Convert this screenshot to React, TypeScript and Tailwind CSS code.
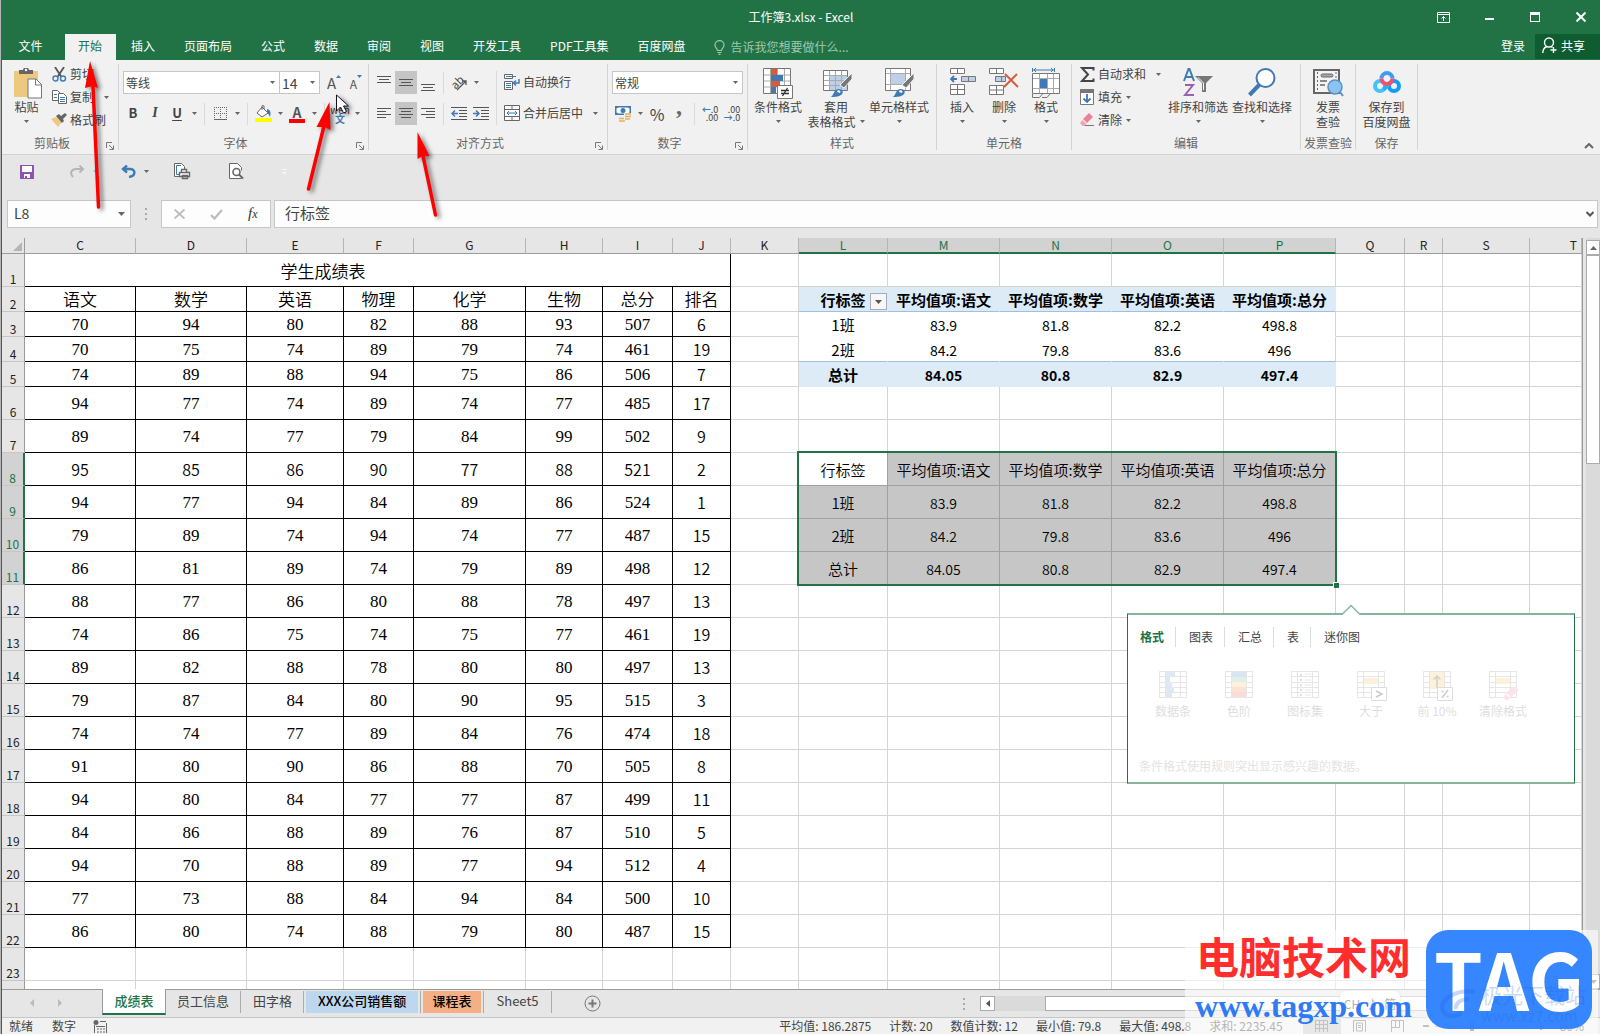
import type { ReactNode } from "react";
import { clsx } from "clsx";

const menuTabs = ["插入", "页面布局", "公式", "数据", "审阅", "视图", "开发工具", "PDF工具集", "百度网盘"];

const columns = [
  { name: "C", width: 111 },
  { name: "D", width: 111 },
  { name: "E", width: 97 },
  { name: "F", width: 70 },
  { name: "G", width: 112 },
  { name: "H", width: 77 },
  { name: "I", width: 70 },
  { name: "J", width: 58 },
  { name: "K", width: 68 },
  { name: "L", width: 89 },
  { name: "M", width: 112 },
  { name: "N", width: 112 },
  { name: "O", width: 112 },
  { name: "P", width: 112 },
  { name: "Q", width: 69 },
  { name: "R", width: 38 },
  { name: "S", width: 87 },
  { name: "T" },
];

// rows 2 - 22 of the score sheet, columns C - J
const scores: (string | number)[][] = [
  ["语文", "数学", "英语", "物理", "化学", "生物", "总分", "排名"],
  [70, 94, 80, 82, 88, 93, 507, 6],
  [70, 75, 74, 89, 79, 74, 461, 19],
  [74, 89, 88, 94, 75, 86, 506, 7],
  [94, 77, 74, 89, 74, 77, 485, 17],
  [89, 74, 77, 79, 84, 99, 502, 9],
  [95, 85, 86, 90, 77, 88, 521, 2],
  [94, 77, 94, 84, 89, 86, 524, 1],
  [79, 89, 74, 94, 74, 77, 487, 15],
  [86, 81, 89, 74, 79, 89, 498, 12],
  [88, 77, 86, 80, 88, 78, 497, 13],
  [74, 86, 75, 74, 75, 77, 461, 19],
  [89, 82, 88, 78, 80, 80, 497, 13],
  [79, 87, 84, 80, 90, 95, 515, 3],
  [74, 74, 77, 89, 84, 76, 474, 18],
  [91, 80, 90, 86, 88, 70, 505, 8],
  [94, 80, 84, 77, 77, 87, 499, 11],
  [84, 86, 88, 89, 76, 87, 510, 5],
  [94, 70, 88, 89, 77, 94, 512, 4],
  [77, 73, 88, 84, 94, 84, 500, 10],
  [86, 80, 74, 88, 79, 80, 487, 15],
];

const pivot = [
  ["行标签", "平均值项:语文", "平均值项:数学", "平均值项:英语", "平均值项:总分"],
  ["1班", "83.9", "81.8", "82.2", "498.8"],
  ["2班", "84.2", "79.8", "83.6", "496"],
  ["总计", "84.05", "80.8", "82.9", "497.4"],
];

const stats = ["平均值: 186.2875", "计数: 20", "数值计数: 12", "最小值: 79.8", "最大值: 498.8", "求和: 2235.45"];

/* ---------- small pieces ---------- */

function Caret({ className }: { className?: string }) {
  return (
    <svg className={clsx("shrink-0", className)} width="5" height="3" viewBox="0 0 5 3">
      <path d="M0 0h5L2.5 3z" fill="#666" />
    </svg>
  );
}

function DropButton({ label }: { label: string }) {
  return (
    <button aria-label={label} className="flex h-full w-3 items-center justify-center">
      <Caret />
    </button>
  );
}

function Tool({ label, active, children }: { label: string; active?: boolean; children: ReactNode }) {
  return (
    <button
      aria-label={label}
      className={clsx("flex h-[23px] w-[22px] shrink-0 items-center justify-center", active && "bg-[#c5c5c5]")}
    >
      {children}
    </button>
  );
}

function Sep() {
  return <div className="mx-1 h-[22px] w-px bg-[#dadada]" />;
}

function Group({ label, launcher, className, children }: { label: string; launcher?: boolean; className: string; children: ReactNode }) {
  return (
    <>
      <section aria-label={label} className={clsx("flex shrink-0 flex-col", className)}>
        <div className="flex flex-1">{children}</div>
        <div className="mb-[3px] flex h-4 items-center text-[#666]">
          <span className="flex-1 text-center whitespace-nowrap">{label}</span>
          {launcher && (
            <button aria-label={label + "设置"} className="flex w-4 items-center justify-center pt-1.5">
              <svg width="8" height="8" viewBox="0 0 8 8" fill="none" stroke="#777">
                <path d="M.5 6V.5H6M3 3l4 4M7.5 3.5v4h-4" />
              </svg>
            </button>
          )}
        </div>
      </section>
      <div className="my-1 w-px shrink-0 bg-[#d4d4d4]" />
    </>
  );
}

function BigButton({ icon, lines, caret, className }: { icon: ReactNode; lines: string[]; caret?: boolean; className: string }) {
  return (
    <button className={clsx("flex shrink-0 flex-col items-center pt-2 leading-[15px] whitespace-nowrap", className)}>
      <span className="flex h-[31px] items-start">{icon}</span>
      <span>{lines[0]}</span>
      <span className="flex h-[15px] items-center gap-1">
        {lines[1]}
        {caret && <Caret />}
      </span>
    </button>
  );
}

function SmallButton({ icon, label, caret, wide }: { icon: ReactNode; label: string; caret?: boolean; wide?: boolean }) {
  return (
    <button className="flex h-[23px] items-center pb-px whitespace-nowrap">
      <span className="mr-[3px] flex w-4 justify-center">{icon}</span>
      {label}
      {caret && <Caret className={wide ? "ml-2.5" : "ml-1"} />}
    </button>
  );
}

function Lines({ rows, blue }: { rows: number[][]; blue?: string }) {
  return (
    <svg width="16" height="16" viewBox="0 0 16 16" fill="none" stroke="#555">
      {rows.map(([x, y, w], i) => (
        <path key={i} d={`M${x} ${y + 0.5}h${w}`} />
      ))}
      {blue && <path d={blue} stroke="#3f7ab5" strokeWidth="1.5" />}
    </svg>
  );
}

function GridIcon({ children }: { children?: ReactNode }) {
  return (
    <svg width="30" height="31" viewBox="0 0 30 31" fill="none">
      <path d="M.5.5h27v25H.5z" fill="#fff" stroke="#777" />
      <path d="M7.5 1v24M14.5 1v24M21.5 1v24M1 7h26M1 13h26M1 19h26" stroke="#aaa" />
      {children}
    </svg>
  );
}

function Brush() {
  return (
    <>
      <path d="M29 5v6l-8 9-4-3z" fill="#777" stroke="#f1f1f1" />
      <path d="M7 29c4 0 3-8 9-8 4 0 5 4 2 6-3 2-7 2-11 2z" fill="#3f7ab5" />
      <path d="M14 24c0-3 5-2 3 1z" fill="#fff" />
    </>
  );
}

/* ---------- title + tabs ---------- */

function TitleBar() {
  return (
    <header className="bg-[#217346] text-white">
      <div className="grid h-[34px] grid-cols-[1fr_auto_1fr] items-center">
        <span />
        <h1>工作簿3.xlsx - Excel</h1>
        <div className="flex justify-end">
          <button aria-label="功能区显示选项" className="flex h-8 w-[46px] items-center justify-center">
            <svg width="13" height="11" viewBox="0 0 13 11" fill="none" stroke="#fff">
              <path d="M.5.5h12v10H.5zM1 2.5h11M6.5 9V4.5M4.5 6.5l2-2 2 2" />
            </svg>
          </button>
          <button aria-label="最小化" className="flex h-8 w-[46px] items-center justify-center">
            <span className="mt-1 h-0.5 w-[9px] bg-white" />
          </button>
          <button aria-label="最大化" className="flex h-8 w-[46px] items-center justify-center">
            <span className="h-2.5 w-2.5 border border-t-3 border-white" />
          </button>
          <button aria-label="关闭" className="flex h-8 w-[42px] items-center justify-center pl-1">
            <svg width="10" height="10" viewBox="0 0 10 10" stroke="#fff" strokeWidth="2">
              <path d="M.5.5l9 9M9.5.5l-9 9" />
            </svg>
          </button>
        </div>
      </div>
      <nav className="flex h-[26px]">
        <button className="w-[63px] pr-1.5 pb-[3px]">文件</button>
        <button className="w-[51px] bg-[#f1f1f1] pr-px pb-[3px] text-[#217346]">开始</button>
        {menuTabs.map((t) => (
          <button key={t} className="pr-3.5 pb-[3px] pl-[15px] whitespace-nowrap">
            {t}
          </button>
        ))}
        <label className="ml-3.5 flex flex-1 items-center gap-1.5 text-[#9fc7ae]">
          <svg width="11" height="15" viewBox="0 0 11 15" fill="none" stroke="#9fc7ae" strokeWidth="1.2">
            <path d="M3.5 10.5C3.5 8.5 1 8 1 5a4.5 4.3 0 0 1 9 0c0 3-2.5 3.5-2.5 5.5zM3.5 12.5h4M4.5 14.3h2" />
          </svg>
          <input className="flex-1 pb-px outline-none placeholder:text-[#9fc7ae]" placeholder="告诉我您想要做什么..." />
        </label>
        <button className="px-2.5 pb-[3px]">登录</button>
        <button className="mb-px flex w-[65px] items-center gap-1 bg-[#0e5c2f] pb-0.5 pl-[7px]">
          <svg width="15" height="17" viewBox="0 0 15 17" fill="none" stroke="#fff" strokeWidth="1.4">
            <circle cx="7" cy="5.5" r="4.5" />
            <path d="M.8 16c0-3.5 1.5-5.5 4-6.5M9 9.500l1.500 1M11.500 10v6M8.500 13h6" />
          </svg>
          共享
        </button>
      </nav>
    </header>
  );
}

/* ---------- ribbon ---------- */

function ClipboardGroup() {
  return (
    <Group label="剪贴板" launcher className="w-[116px]">
      <BigButton
        className="w-[49px]"
        lines={["粘贴"]}
        caret
        icon={
          <svg className="ml-[3px]" width="28" height="31" viewBox="0 0 28 31">
            <path d="M0 3h24v26H0z" fill="#edc87f" />
            <path d="M5 6V2h4c0-3 6-3 6 0h4v4z" fill="#666" />
            <circle cx="12" cy="2" r="1.2" fill="#fff" />
            <path d="M14 11h8l5.5 5.5V30H14z" fill="#fff" stroke="#777" />
            <path d="M21.5 11v6h6" fill="none" stroke="#777" />
          </svg>
        }
      />
      <div className="flex flex-col pt-[3px]">
        <SmallButton
          label="剪切"
          icon={
            <svg width="15" height="15" viewBox="0 0 15 15" fill="none">
              <path d="M3 0l6.500 10M12 0L5.500 10" stroke="#555" strokeWidth="1.8" />
              <circle cx="3.5" cy="11.5" r="2.5" stroke="#3f7ab5" strokeWidth="1.4" />
              <circle cx="11" cy="11.5" r="2.5" stroke="#3f7ab5" strokeWidth="1.4" />
            </svg>
          }
        />
        <div className="flex items-center">
          <SmallButton
            label="复制"
            icon={
              <svg width="15" height="14" viewBox="0 0 15 14" fill="#fff" stroke="#666">
                <path d="M.5.5h5l3 3v7h-8z" />
                <path d="M6.5 3.5h5l3 3v7h-8z" />
                <path d="M2 4.5h3M2 7.5h3M8 7.5h5M8 9.5h5M8 11.5h5" stroke="#3f7ab5" />
              </svg>
            }
          />
          <Caret className="ml-2.5" />
        </div>
        <SmallButton
          label="格式刷"
          icon={
            <svg width="16" height="14" viewBox="0 0 16 14">
              <path d="M0 6l5-2 6 5-4 5z" fill="#edc87f" />
              <path d="M5 3l3-2 2 2 4-3 2 2-4 4 1 2-2 2z" fill="#666" />
            </svg>
          }
        />
      </div>
    </Group>
  );
}

function FontGroup() {
  return (
    <Group label="字体" launcher className="w-[249px]">
      <div className="flex flex-col gap-2 pt-[11px] pl-[3px]">
        <div className="ml-px flex h-[23px]">
          <label className="flex w-[157px] items-center border border-[#c6c6c6] bg-white pr-1">
            <select aria-label="字体名称" className="flex-1 appearance-none pl-0.5 outline-none">
              <option>等线</option>
            </select>
            <Caret />
          </label>
          <label className="-ml-px mr-[3px] flex w-[41px] items-center border border-[#c6c6c6] bg-white pr-1">
            <select aria-label="字号" className="w-6 flex-1 appearance-none pl-0.5 text-sm leading-5 outline-none">
              <option>14</option>
            </select>
            <Caret />
          </label>
          <Tool label="增大字号">
            <span className="text-[15px] text-[#555]">A</span>
            <svg className="mb-3" width="5" height="3" viewBox="0 0 5 3">
              <path d="M0 3h5L2.5 0z" fill="#3f7ab5" />
            </svg>
          </Tool>
          <Tool label="减小字号">
            <span className="pt-0.5 text-xs text-[#555]">A</span>
            <svg className="mb-3" width="5" height="3" viewBox="0 0 5 3">
              <path d="M0 0h5L2.5 3z" fill="#3f7ab5" />
            </svg>
          </Tool>
        </div>
        <div className="flex h-[23px] items-center">
          <Tool label="加粗"><b className="pb-0.5 text-[13px]">B</b></Tool>
          <Tool label="倾斜"><i className="pb-0.5 font-['Liberation_Serif',serif] text-sm font-bold">I</i></Tool>
          <Tool label="下划线"><u className="pb-0.5 text-[13px] font-bold underline-offset-2">U</u></Tool>
          <DropButton label="下划线样式" />
          <Sep />
          <Tool label="边框">
            <svg width="13" height="13" viewBox="0 0 13 13" fill="none" stroke="#666">
              <path d="M.5 0v12M6.5 0v12M12.5 0v12M0 .5h13M0 6.5h13" strokeDasharray="1 1" />
              <path d="M0 12.5h13" />
            </svg>
          </Tool>
          <DropButton label="边框样式" />
          <Sep />
          <Tool label="填充颜色">
            <svg width="17" height="17" viewBox="0 0 17 17">
              <path d="M7 2l6 6-6 4-5-4z" fill="#fff" stroke="#666" />
              <path d="M7 5V1c0-1 2-1 2 0v3" fill="none" stroke="#666" />
              <path d="M12 4c4 1 4 4 3 8-1-2-1-3-3-4z" fill="#3f7ab5" />
              <path d="M0 13h17v4H0z" fill="#ff0" />
            </svg>
          </Tool>
          <DropButton label="选择填充颜色" />
          <Tool label="字体颜色">
            <span className="flex w-4 flex-col items-center border-b-4 border-[#f00] text-sm leading-[14px] font-bold text-[#555]">A</span>
          </Tool>
          <DropButton label="选择字体颜色" />
          <Sep />
          <Tool label="拼音指南">
            <span className="flex flex-col items-center text-[10px] leading-[9px]">
              wén<b className="text-[#3f7ab5]">文</b>
            </span>
          </Tool>
          <DropButton label="拼音设置" />
        </div>
      </div>
    </Group>
  );
}

function AlignGroup() {
  return (
    <Group label="对齐方式" launcher className="w-[238px]">
      <div className="flex w-[127px] shrink-0 flex-col gap-2 pt-[11px]">
        <div className="flex items-center pl-1">
          <Tool label="顶端对齐"><Lines rows={[[1, 1, 14], [3, 4, 10], [1, 7, 14]]} /></Tool>
          <Tool label="垂直居中" active><Lines rows={[[1, 4, 14], [3, 7, 10], [1, 10, 14]]} /></Tool>
          <Tool label="底端对齐"><Lines rows={[[1, 9, 14], [3, 12, 10], [1, 15, 14]]} /></Tool>
          <Sep />
          <Tool label="方向">
            <svg className="overflow-visible" width="17" height="16" viewBox="0 0 17 16">
              <text x="1" y="12" fontSize="11" fill="#444" transform="rotate(-45 6 9)">ab</text>
              <path d="M6 15L15 6M11 6h4v4" fill="none" stroke="#555" strokeWidth="1.3" />
            </svg>
          </Tool>
          <DropButton label="方向选项" />
        </div>
        <div className="flex items-center pl-1">
          <Tool label="左对齐"><Lines rows={[[1, 2, 14], [1, 5, 9], [1, 8, 14], [1, 11, 9]]} /></Tool>
          <Tool label="居中" active><Lines rows={[[1, 2, 14], [3, 5, 10], [1, 8, 14], [3, 11, 10]]} /></Tool>
          <Tool label="右对齐"><Lines rows={[[1, 2, 14], [6, 5, 9], [1, 8, 14], [6, 11, 9]]} /></Tool>
          <Sep />
          <Tool label="减少缩进"><Lines rows={[[0, 1, 16], [8, 4, 8], [8, 7, 8], [8, 10, 8], [0, 13, 16]]} blue="M7 7.5H1M4 4.5l-3 3 3 3" /></Tool>
          <Tool label="增加缩进"><Lines rows={[[0, 1, 16], [8, 4, 8], [8, 7, 8], [8, 10, 8], [0, 13, 16]]} blue="M0 7.5h6M3 4.5l3 3-3 3" /></Tool>
        </div>
      </div>
      <div className="mt-[11px] h-[54px] w-px bg-[#dadada]" />
      <div className="flex flex-col gap-2 pt-[11px] pl-[7px]">
        <SmallButton
          label="自动换行"
          icon={
            <svg width="16" height="16" viewBox="0 0 16 16" fill="none" stroke="#666">
              <path d="M.5.5h8v4h-8zM.5 7.5h8v8h-8z" fill="#fff" />
              <path d="M2 2.5h10M2 9.5h5M2 11.5h5M2 13.5h5" stroke="#3f7ab5" />
              <path d="M15 5v4H10M12 6.5L9.5 9l2.5 2.5" stroke="#3f7ab5" strokeWidth="1.5" />
            </svg>
          }
        />
        <SmallButton
          label="合并后居中"
          caret
          wide
          icon={
            <svg width="16" height="16" viewBox="0 0 16 16" fill="#fff" stroke="#666">
              <path d="M.5.5h15v15H.5zM0 4.5h16M0 11.5h16M8 0v4M8 12v4" />
              <path d="M3 8h10M5 6L3 8l2 2M11 6l2 2-2 2" fill="none" stroke="#3f7ab5" />
            </svg>
          }
        />
      </div>
    </Group>
  );
}

function NumberGroup() {
  return (
    <Group label="数字" launcher className="w-[139px]">
      <div className="flex flex-col gap-2 pt-[11px] pl-1">
        <label className="flex h-[23px] w-[131px] items-center border border-[#c6c6c6] bg-white pr-1">
          <select aria-label="数字格式" className="flex-1 appearance-none pl-0.5 outline-none">
            <option>常规</option>
          </select>
          <Caret />
        </label>
        <div className="flex h-[23px] items-center">
          <Tool label="会计数字格式">
            <svg width="17" height="16" viewBox="0 0 17 16">
              <path d="M0 0h16v9H0z" fill="#3f7ab5" />
              <path d="M1.5 2.5l2-1h9l2 1v4l-2 1h-9l-2-1z" fill="#fff" />
              <circle cx="8" cy="4.5" r="2.5" fill="#3f7ab5" />
              <path d="M9 7h7v8H4v-4h5z" fill="#f1f1f1" />
              <path d="M10 8h6M10 10.5h6M10 13h5M4 12.5h5M4 15h6" stroke="#e3b15b" strokeWidth="1.7" />
            </svg>
          </Tool>
          <DropButton label="会计格式选项" />
          <Tool label="百分比样式"><span className="text-base">%</span></Tool>
          <Tool label="千位分隔样式"><span className="pb-4 font-['Liberation_Serif',serif] text-2xl leading-5 font-bold text-[#666]">,</span></Tool>
          <Sep />
          <Tool label="增加小数位数">
            <span className="flex flex-col text-right text-[9px] leading-[8px]"><span><b className="text-[#3f7ab5]">←</b>.0</span><span>.00</span></span>
          </Tool>
          <Tool label="减少小数位数">
            <span className="flex flex-col text-right text-[9px] leading-[8px]"><span>.00</span><span><b className="text-[#3f7ab5]">→</b>.0</span></span>
          </Tool>
        </div>
      </div>
    </Group>
  );
}

function StyleGroup() {
  return (
    <Group label="样式" className="w-[188px]">
      <BigButton
        className="w-[60px]"
        lines={["条件格式"]}
        caret
        icon={
          <GridIcon>
            <path d="M8 1h6v6H8zM8 13h9v6H8z" fill="#d65d3b" />
            <path d="M8 7h12v6H8zM8 19h5v6H8z" fill="#3f7ab5" />
            <path d="M14.5 17.5h15v13h-15z" fill="#fff" stroke="#777" />
            <path d="M18 22.5h8M18 25.5h8M24.5 20l-5 8" stroke="#333" strokeWidth="1.3" />
          </GridIcon>
        }
      />
      <BigButton
        className="w-[56px]"
        lines={["套用", "表格格式"]}
        caret
        icon={
          <svg className="ml-[3px]" width="30" height="31" viewBox="0 0 30 31" fill="none">
            <path d="M.5 2.5h24v20H.5z" fill="#fff" stroke="#777" />
            <path d="M7 8h17v14H7z" fill="#bdd0e8" />
            <path d="M6.5 3v19M12.5 3v19M18.5 3v19M1 7.5h23M1 12.5h23M1 17.5h23" stroke="#aaa" />
            <Brush />
          </svg>
        }
      />
      <BigButton
        className="w-[70px]"
        lines={["单元格样式"]}
        caret
        icon={
          <svg className="ml-0.5" width="30" height="31" viewBox="0 0 30 31" fill="none">
            <path d="M.5.5h25v22H.5z" fill="#fff" stroke="#777" />
            <path d="M5.5 1v21M20.5 1v21M1 5.5h24M1 16.5h24" stroke="#aaa" />
            <path d="M6 6h14v10H6z" fill="#bdd0e8" />
            <Brush />
          </svg>
        }
      />
    </Group>
  );
}

function CellGroup() {
  return (
    <Group label="单元格" className="w-[134px]">
      <div className="flex pl-1">
        <BigButton
          className="w-[42px]"
          lines={["插入"]}
          caret
          icon={
            <svg width="27" height="28" viewBox="0 0 27 28" fill="#fff" stroke="#777">
              <path d="M1.5.5h14v5h-14zM8.5.5v5M1.5 16.5h14v10h-14zM8.5 16.5v10M1.5 21.5h14" />
              <path d="M12.5 8.5h14v5h-14zM19.5 8.5v5" fill="#bdd0e8" />
              <path d="M8 11H2M5 8l-3 3 3 3" fill="none" stroke="#3f7ab5" strokeWidth="1.8" />
            </svg>
          }
        />
        <BigButton
          className="w-[42px]"
          lines={["删除"]}
          caret
          icon={
            <svg width="30" height="28" viewBox="0 0 30 28" fill="#fff" stroke="#777">
              <path d="M.5.5h14v5H.5zM7.5.5v5M.5 17.5h14v9H.5zM7.5 17.5v9M.5 22h14" />
              <path d="M6.5 8.5h10v5h-10zM12.5 8.5v5" fill="#bdd0e8" />
              <path d="M16 6l13 13M28 6L15 19" stroke="#d65d3b" strokeWidth="2" />
            </svg>
          }
        />
        <BigButton
          className="w-[42px]"
          lines={["格式"]}
          caret
          icon={
            <svg width="28" height="31" viewBox="0 0 28 31" fill="none">
              <path d="M.5 5.5h27v20H.5z" fill="#fff" stroke="#777" />
              <path d="M7.5 6v19M15.5 6v19M21.5 6v19M1 10.5h26M1 20.5h26" stroke="#aaa" />
              <path d="M8 11h7v9H8z" fill="#3f7ab5" />
              <path d="M.5 0v4M22.5 0v4M1 2h21M4 0L2 2l2 2M19 0l2 2-2 2" stroke="#3f7ab5" />
              <path d="M.5 26v3.5h7l3-3.5M10 29.5h5l3-3.5" stroke="#777" />
            </svg>
          }
        />
      </div>
    </Group>
  );
}

function EditGroup() {
  return (
    <Group label="编辑" className="w-[228px]">
      <div className="flex w-[95px] flex-col pt-[3px] pl-[7px]">
        <SmallButton
          label="自动求和"
          caret
          wide
          icon={
            <svg width="15" height="15" viewBox="0 0 15 15" fill="none" stroke="#444" strokeWidth="2">
              <path d="M13.5 3.5V1H2l6 6.5L2 14h11.5v-2.5" />
            </svg>
          }
        />
        <SmallButton
          label="填充"
          caret
          icon={
            <svg width="14" height="16" viewBox="0 0 14 16" fill="none">
              <path d="M.5.5h13v15H.5z" fill="#fff" stroke="#777" />
              <path d="M0 0h14v4H0z" fill="#777" />
              <path d="M7 5v8M3.5 9.5L7 13l3.5-3.5" stroke="#3f7ab5" strokeWidth="1.8" />
            </svg>
          }
        />
        <SmallButton
          label="清除"
          caret
          icon={
            <svg width="15" height="14" viewBox="0 0 15 14">
              <path d="M9 0l4 4-6 6-4-4z" fill="#e8839a" />
              <path d="M2.5 7l4 4-2 2h-2L0 10z" fill="#f0a5b5" />
              <path d="M5 12.5h9" stroke="#777" />
            </svg>
          }
        />
      </div>
      <BigButton
        className="w-[62px]"
        lines={["排序和筛选"]}
        caret
        icon={
          <svg width="30" height="30" viewBox="0 0 30 30">
            <path d="M1 13L5.5 1h1L11 13M3 9h6" fill="none" stroke="#3f7ab5" strokeWidth="2" />
            <path d="M2 17h8L2 27h9" fill="none" stroke="#9b5fb5" strokeWidth="2" />
            <path d="M12 8h18l-7 7v9h-4v-9z" fill="#777" />
            <path d="M15 9.5l5.5 5.5v7" fill="none" stroke="#fff" />
          </svg>
        }
      />
      <BigButton
        className="w-[66px]"
        lines={["查找和选择"]}
        caret
        icon={
          <svg width="28" height="29" viewBox="0 0 28 29">
            <path d="M12 16L1.5 27" stroke="#3f7ab5" strokeWidth="4" />
            <circle cx="17.5" cy="10" r="9" fill="#fff" stroke="#3f7ab5" strokeWidth="2" />
          </svg>
        }
      />
    </Group>
  );
}

function Ribbon() {
  return (
    <div className="flex h-[95px] border-b border-[#d2d2d2] bg-[#f1f1f1]">
      <ClipboardGroup />
      <FontGroup />
      <AlignGroup />
      <NumberGroup />
      <StyleGroup />
      <CellGroup />
      <EditGroup />
      <Group label="发票查验" className="w-[54px]">
        <BigButton
          className="w-full"
          lines={["发票", "查验"]}
          icon={
            <svg width="31" height="29" viewBox="0 0 31 29" fill="none">
              <path d="M1 2h25v23H1z" fill="#f4f4f4" stroke="#666" strokeWidth="2" />
              <path d="M4.5 4v20M23 4v8" stroke="#666" strokeDasharray="2 2" />
              <rect x="8" y="6" width="12" height="3" rx="1.5" fill="#aaa" stroke="#666" />
              <path d="M7 13h7M7 17h5" stroke="#666" strokeWidth="1.5" />
              <circle cx="22" cy="19" r="7" fill="#8cc3f0" stroke="#5793c4" strokeWidth="1.5" />
              <path d="M27 24l3 4" stroke="#5793c4" strokeWidth="2" />
            </svg>
          }
        />
      </Group>
      <Group label="保存" className="w-[61px]">
        <BigButton
          className="w-full"
          lines={["保存到", "百度网盘"]}
          icon={
            <svg className="mt-0.5" width="28" height="24" viewBox="0 0 28 24" fill="none" strokeWidth="4">
              <circle cx="7" cy="16" r="5" stroke="#3fc4f5" />
              <circle cx="21" cy="16" r="5" stroke="#139df5" />
              <path d="M10.5 19.5l7-7" stroke="#2aaef5" />
              <path d="M8.5 8.5a5.5 5.5 0 1 1 11 0" stroke="#3d9df0" />
              <path d="M8.5 8.5a5.5 5.5 0 1 0 11 0" stroke="#f4506e" />
            </svg>
          }
        />
      </Group>
      <button aria-label="折叠功能区" className="ml-auto self-end pr-1.5 pb-[5px]">
        <svg width="10" height="6" viewBox="0 0 10 6" fill="none" stroke="#666" strokeWidth="2">
          <path d="M1 5l4-4 4 4" />
        </svg>
      </button>
    </div>
  );
}

/* ---------- quick access + formula bar ---------- */

function QuickAccess() {
  return (
    <div className="flex h-[45px] items-center pb-3 pl-[18px]">
      <button aria-label="保存">
        <svg width="14" height="14" viewBox="0 0 14 14">
          <path d="M0 0h14v14H0z" fill="#8e54ad" />
          <path d="M2 1h10v6H2zM4 9h6v4H4z" fill="#fff" />
          <path d="M5 11h2v2H5z" fill="#8e54ad" />
        </svg>
      </button>
      <button aria-label="恢复" className="ml-9">
        <svg width="15" height="13" viewBox="0 0 15 13" fill="none" stroke="#b5b5b5" strokeWidth="2">
          <path d="M3 12C-1 8 2 4 6 4h7M9.5.5L13 4 9.5 7.5" />
        </svg>
      </button>
      <Caret className="ml-2 opacity-40" />
      <button aria-label="撤消" className="ml-[23px]">
        <svg width="15" height="13" viewBox="0 0 15 13" fill="none" stroke="#3f7ab5" strokeWidth="2.4">
          <path d="M8 12c7-1 7-8 1-8H2M6 .5L2 4l4 3.5" />
        </svg>
      </button>
      <Caret className="ml-2" />
      <button aria-label="快速打印" className="ml-[25px]">
        <svg width="17" height="17" viewBox="0 0 17 17" fill="#fff" stroke="#666">
          <path d="M5 13.5H.5V.5h7l3 3V7" />
          <path d="M7 2.5H2.5v9H5" fill="none" stroke="#3f7ab5" />
          <path d="M7.5 6.5h5v3h-5zM5.5 9.5h10v4h-10zM8.5 12.5h5v3h-5z" strokeWidth="1.4" />
        </svg>
      </button>
      <button aria-label="打印预览" className="ml-[38px]">
        <svg width="15" height="17" viewBox="0 0 15 17" fill="none" stroke="#666">
          <path d="M12.5 15.5H.5V.5h8l4 4v3" fill="#fff" />
          <circle cx="7.5" cy="9" r="3.5" strokeWidth="1.6" />
          <path d="M10 11.5l4 4" strokeWidth="2" />
        </svg>
      </button>
      <button aria-label="自定义快速访问工具栏" className="ml-[38px] flex flex-col items-center gap-0.5 opacity-70">
        <span className="h-px w-[5px] bg-white" />
        <svg width="5" height="3" viewBox="0 0 5 3"><path d="M0 0h5L2.5 3z" fill="#fff" /></svg>
      </button>
    </div>
  );
}

function FormulaBar() {
  return (
    <div className="mb-2.5 flex h-7 pr-0.5 pl-[5px] text-[15px]">
      <label className="flex w-[124px] items-center border border-[#c6c6c6] bg-[#fdfdfd] pr-[5px]">
        <input aria-label="名称框" defaultValue="L8" className="w-0 flex-1 pb-0.5 pl-1.5 text-sm outline-none" />
        <svg width="7" height="4" viewBox="0 0 7 4"><path d="M0 0h7L3.5 4z" fill="#666" /></svg>
      </label>
      <div className="flex w-[30px] flex-col items-center justify-center gap-[3px]">
        <span className="h-0.5 w-0.5 bg-[#aaa]" />
        <span className="h-0.5 w-0.5 bg-[#aaa]" />
        <span className="h-0.5 w-0.5 bg-[#aaa]" />
      </div>
      <div className="flex w-[110px] items-center justify-around border border-[#c6c6c6] bg-[#fdfdfd]">
        <button aria-label="取消">
          <svg width="11" height="10" viewBox="0 0 11 10" stroke="#bbb" strokeWidth="1.8"><path d="M.5.5l10 9M10.5.5l-10 9" /></svg>
        </button>
        <button aria-label="输入">
          <svg width="13" height="11" viewBox="0 0 13 11" fill="none" stroke="#bbb" strokeWidth="2.2"><path d="M1 6l3.500 3.500L12 1" /></svg>
        </button>
        <button aria-label="插入函数" className="font-['Liberation_Serif',serif] text-[15px] text-[#333] italic">
          f<span className="text-xs">x</span>
        </button>
      </div>
      <label className="ml-[3px] flex flex-1 items-center border border-[#c6c6c6] bg-[#fdfdfd] pr-[3px]">
        <input aria-label="编辑栏" defaultValue="行标签" className="flex-1 pb-0.5 pl-2.5 outline-none" />
        <svg width="8" height="6" viewBox="0 0 8 6" fill="none" stroke="#555" strokeWidth="2"><path d="M.5 1L4 4.5 7.5 1" /></svg>
      </label>
    </div>
  );
}

/* ---------- sheet ---------- */

function ScoreCell({ row, col }: { row: number; col: number }) {
  const value = scores[row - 2][col];
  const sans = row === 8 || col === 7;
  return (
    <td
      className={clsx(
        "border-r border-b border-black text-black",
        row === 2 && "text-[17px] font-[350]",
        row > 2 && (sans ? "text-base font-[350]" : "pt-0.5 font-['Liberation_Serif',serif] text-[17px]"),
      )}
    >
      {value}
    </td>
  );
}

// columns K - T; L - P hold the pivot table and its pasted copy
function RightCell({ row, col }: { row: number; col: number }) {
  const p = col - 9;
  const inPivot = p >= 0 && p < 5;
  const size = (text: string) => (/^[\d.]+$/.test(text) ? "text-sm" : "text-[15px]");

  if (inPivot && row >= 2 && row <= 5) {
    const text = pivot[row - 2][p];
    const shaded = row === 2 || row === 5;
    return (
      <td
        className={clsx(
          "relative border-r border-b pt-px whitespace-nowrap text-black",
          size(text),
          shaded ? "bg-[#ddebf7] font-bold" : "bg-white",
          shaded ? "border-r-[#ddebf7]" : p === 4 ? "border-r-[#d4d4d4]" : "border-r-white",
          (row === 2 || row === 4) && "border-b-[#9bc2e6]",
          row === 3 && "border-b-white",
          row === 5 && "border-b-[#ddebf7]",
        )}
      >
        {text}
        {row === 2 && p === 0 && (
          <button aria-label="筛选" className="absolute right-0 bottom-px flex h-[17px] w-[17px] items-center justify-center border border-[#a5acb5] bg-[#f7f7f7]">
            <svg width="7" height="4" viewBox="0 0 7 4"><path d="M0 0h7L3.5 4z" fill="#555" /></svg>
          </button>
        )}
      </td>
    );
  }
  if (inPivot && row >= 8 && row <= 11) {
    const text = pivot[row - 8][p];
    return (
      <td
        className={clsx(
          "border-r border-b border-[#a0a0a0] pt-0.5 font-[350] whitespace-nowrap text-black",
          size(text),
          row === 8 && p === 0 ? "bg-white" : "bg-[#c6c6c6]",
        )}
      >
        {text}
      </td>
    );
  }
  return <td className="border-r border-b border-[#d4d4d4]" />;
}

function SheetGrid() {
  const rows = Array.from({ length: 24 }, (_, i) => i + 1);
  return (
    <table className="w-full table-fixed border-separate border-spacing-0 bg-white text-center">
      <colgroup>
        <col style={{ width: 23 }} />
        {columns.map((c) => (
          <col key={c.name} style={{ width: c.width }} />
        ))}
      </colgroup>
      <thead>
        <tr className="h-4 text-xs leading-[14px] text-[#222]">
          <th className="border-r border-b border-[#9b9b9b] bg-[#e6e6e6]">
            <svg className="mt-0.5 ml-auto mr-0.5" width="9" height="9" viewBox="0 0 9 9"><path d="M9 0v9H0z" fill="#b5b5b5" /></svg>
          </th>
          {columns.map(({ name }) => {
            const selected = name >= "L" && name <= "P";
            return (
              <th
                key={name}
                scope="col"
                className={clsx(
                  "border-r align-top font-normal",
                  selected ? "border-b-2 border-r-[#b5b5b5] border-b-[#217346] bg-[#d2d2d2] text-[#217346]" : "border-b border-r-[#b5b5b5] border-b-[#9b9b9b] bg-[#e6e6e6]",
                  name === "T" && "pr-1 text-right",
                )}
              >
                {name}
              </th>
            );
          })}
        </tr>
      </thead>
      <tbody>
        {rows.map((row) => {
          const selected = row >= 8 && row <= 11;
          return (
            <tr key={row} className={clsx("leading-5", row > 1 && row < 6 ? "h-[25px]" : "h-[33px]")}>
              <th
                scope="row"
                className={clsx(
                  "border-b border-b-[#c6c6c6] align-bottom text-xs leading-[14px] font-normal",
                  selected ? "border-r-2 border-r-[#217346] bg-[#d2d2d2] text-[#217346]" : "border-r border-r-[#9b9b9b] bg-[#e6e6e6] text-[#222]",
                )}
              >
                {row}
              </th>
              {row === 1 ? (
                // merged range starts left of the visible area
                <td colSpan={8} className="border-r border-b border-black pt-px pr-[109px] text-[17px] font-[350] text-black">
                  学生成绩表
                </td>
              ) : (
                columns.slice(0, 8).map((c, i) =>
                  row <= 22 ? <ScoreCell key={c.name} row={row} col={i} /> : <td key={c.name} className="border-r border-b border-[#d4d4d4]" />,
                )
              )}
              {columns.slice(8).map((c, i) => (
                <RightCell key={c.name} row={row} col={i + 8} />
              ))}
            </tr>
          );
        })}
      </tbody>
    </table>
  );
}

function MiniGrid({ children }: { children: ReactNode }) {
  return (
    <svg width="32" height="30" viewBox="0 0 32 30" fill="none">
      <path d="M2.5.5h27v26h-27zM8.5.5v26M23.5.5v26M2.5 5.5h27M2.5 11.5h27M2.5 16.5h27M2.5 21.5h27" stroke="#e6e6e6" />
      {children}
    </svg>
  );
}

const analysisItems = [
  { label: "数据条", art: <path d="M9 1h9v5H9zM9 6h4v5H9zM9 11h6v5H9zM9 16h8v5H9zM9 21h6v5H9z" fill="#dfe9f5" /> },
  {
    label: "色阶",
    art: (
      <>
        <path d="M9 1h14v5H9z" fill="#d9e6f2" />
        <path d="M9 6h14v5H9z" fill="#e0efea" />
        <path d="M9 11h14v5H9z" fill="#fdf1dc" />
        <path d="M9 16h14v5H9z" fill="#fae3d5" />
        <path d="M9 21h14v5H9z" fill="#f9dcd6" />
      </>
    ),
  },
  {
    label: "图标集",
    art: (
      <>
        <path d="M11 3h2v2h-2zM11 13h2v2h-2zM11 23h2v2h-2z" fill="#cfe8dc" />
        <path d="M11 8h2v2h-2zM11 18h2v2h-2z" fill="#f9d3bd" />
        <path d="M16 3h6M16 9h6M16 14h6M16 19h6M16 24h6" stroke="#e6e6e6" />
      </>
    ),
  },
  {
    label: "大于",
    art: (
      <>
        <path d="M9 7h14v6H9z" fill="#fdf1dc" />
        <path d="M16.5 16.5h15v13h-15z" fill="#fff" stroke="#ddd" />
        <path d="M21 20l6 3-6 3" stroke="#ccc" strokeWidth="1.5" />
      </>
    ),
  },
  {
    label: "前 10%",
    art: (
      <>
        <path d="M9 1h14v17H9z" fill="#fdf1dc" />
        <path d="M16 17V5M12.5 8.5L16 5l3.5 3.5" stroke="#d0d0d0" strokeWidth="1.5" />
        <path d="M16.5 16.5h15v13h-15z" fill="#fff" stroke="#ddd" />
        <path d="M27 19l-6 8M20.5 20.5h2M25.5 25.5h2" stroke="#ccc" strokeWidth="1.5" />
      </>
    ),
  },
  {
    label: "清除格式",
    art: (
      <>
        <path d="M9 7h14v6H9z" fill="#fdf1dc" />
        <path d="M27 15l5 4-8 7-5-4z" fill="#fbe3e8" />
        <path d="M18 23l5 4-3 3-3-3z" fill="#fbe3e8" />
      </>
    ),
  },
];

function QuickAnalysis() {
  const tabs = ["格式", "图表", "汇总", "表", "迷你图"];
  return (
    <div className="absolute top-[375px] left-[1125px] h-[171px] w-[448px] border border-[#217346] border-y-[#86b59a] border-y-2 bg-white">
      <svg className="absolute -top-[11px] left-[213px]" width="20" height="12" viewBox="0 0 20 12">
        <path d="M1 11L10 1.5 19 11v1H1z" fill="#fff" />
        <path d="M1 10.5L10 1.5l9 9" fill="none" stroke="#86b59a" strokeWidth="1.4" />
      </svg>
      <div className="flex pt-3">
        {tabs.map((t, i) => (
          <button
            key={t}
            className={clsx("h-5 pl-3 whitespace-nowrap", i < 4 && "mr-px border-r border-[#ddd] pr-[11px]", i === 0 && "font-bold text-[#217346]")}
          >
            {t}
          </button>
        ))}
      </div>
      <div className="mt-6 flex pl-3 text-[#dedede]">
        {analysisItems.map((it) => (
          <button key={it.label} className="flex w-[66px] flex-col items-center gap-0.5 whitespace-nowrap">
            <MiniGrid>{it.art}</MiniGrid>
            {it.label}
          </button>
        ))}
      </div>
      <p className="mt-[39px] pl-[11px] text-[#e3e3e3]">条件格式使用规则突出显示感兴趣的数据。</p>
    </div>
  );
}

function Sheet() {
  return (
    <div className="flex min-h-0 flex-1">
      <div className="relative min-w-0 flex-1 overflow-hidden border-r border-[#9b9b9b] bg-white">
        <SheetGrid />
        <div className="pointer-events-none absolute top-[213px] left-[795px] h-[135px] w-[540px] border-2 border-[#217346]">
          <span className="absolute -right-1 -bottom-1 h-1.5 w-1.5 border-t border-l border-white bg-[#217346]" />
        </div>
        <QuickAnalysis />
      </div>
      <div className="ml-[3px] flex w-3.5 flex-col bg-[#dadada] pt-0.5">
        <button aria-label="向上滚动" className="flex h-[15px] items-center justify-center border border-[#ababab] bg-white">
          <svg width="7" height="4" viewBox="0 0 7 4"><path d="M0 4h7L3.5 0z" fill="#666" /></svg>
        </button>
        <div className="h-[209px] border border-[#ababab] bg-white" />
        <button aria-label="向下滚动" className="mt-auto flex h-[15px] items-center justify-center border border-[#ababab] bg-white">
          <svg width="7" height="4" viewBox="0 0 7 4"><path d="M0 0h7L3.5 4z" fill="#666" /></svg>
        </button>
      </div>
    </div>
  );
}

/* ---------- bottom bars ---------- */

function SheetTabs() {
  return (
    <div className="flex h-7 items-start border-t border-[#9b9b9b] text-[13px]">
      <div className="flex h-[26px] w-[100px] items-center gap-6 pl-7">
        <button aria-label="上一个工作表"><svg width="4" height="8" viewBox="0 0 4 8"><path d="M4 0v8L0 4z" fill="#bbb" /></svg></button>
        <button aria-label="下一个工作表"><svg width="4" height="8" viewBox="0 0 4 8"><path d="M0 0v8l4-4z" fill="#bbb" /></svg></button>
      </div>
      <button className="-mt-px h-[26px] w-16 border-x border-b-2 border-x-[#9b9b9b] border-b-[#217346] bg-white pb-px font-medium text-[#217346]">成绩表</button>
      <div className="flex h-6 items-center">
        <button className="h-[22px] border-r border-[#ababab] px-[11px] pb-0.5">员工信息</button>
        <button className="h-[22px] border-r border-[#ababab] pr-[11px] pb-0.5 pl-3">田字格</button>
        <button className="ml-0.5 h-[22px] w-[112px] bg-[#bdd7ee] pb-0.5 font-medium whitespace-nowrap text-black">XXX公司销售额</button>
        <button className="ml-0.5 border-l border-[#ababab] pl-0.5">
          <span className="flex h-[22px] w-[58px] items-center justify-center bg-[#f4b084] pb-0.5 font-medium text-black">课程表</span>
        </button>
        <button className="ml-0.5 h-[22px] w-[69px] border-x border-[#ababab] pb-0.5">Sheet5</button>
      </div>
      <button aria-label="新工作表" className="mt-[5px] ml-8">
        <svg width="17" height="17" viewBox="0 0 17 17" fill="none" stroke="#777">
          <circle cx="8.5" cy="8.5" r="7.5" />
          <path d="M8.5 4.5v8M4.5 8.5h8" strokeWidth="2" />
        </svg>
      </button>
      <div className="flex flex-1 items-center pt-1.5 pr-6">
        <div className="ml-auto flex flex-col gap-[3px]">
          <span className="h-0.5 w-0.5 bg-[#aaa]" />
          <span className="h-0.5 w-0.5 bg-[#aaa]" />
          <span className="h-0.5 w-0.5 bg-[#aaa]" />
        </div>
        <button aria-label="向左滚动" className="ml-[15px] flex h-[15px] w-[15px] items-center justify-center border border-[#ababab] bg-white">
          <svg width="4" height="7" viewBox="0 0 4 7"><path d="M4 0v7L0 3.5z" fill="#555" /></svg>
        </button>
        <div className="flex h-[15px] w-[581px] bg-[#dadada] pl-[50px]">
          <div className="w-[440px] border border-[#ababab] bg-white" />
        </div>
      </div>
    </div>
  );
}

function StatusBar() {
  return (
    <footer className="flex h-[17px] items-center border-t border-[#c6c6c6] bg-[#f1f1f1] pl-[7px] leading-4 whitespace-nowrap">
      <span className="w-[43px]">就绪</span>
      <span className="w-[41px]">数字</span>
      <svg width="14" height="13" viewBox="0 0 14 13" fill="none" stroke="#666">
        <circle cx="3" cy="2.5" r="2.5" fill="#666" stroke="none" />
        <path d="M7 1.5h6M1.5 5v8M13.5 3v10M3 6.5h9M4 9h2M7 9h2M10 9h2M4 12h2M7 12h2M10 12h2" />
      </svg>
      <div className="ml-auto flex gap-[18px]">
        {stats.map((s) => (
          <span key={s}>{s}</span>
        ))}
      </div>
      <div className="ml-5 flex h-4 items-center">
        <button aria-label="普通" className="flex h-4 w-[38px] items-center justify-center bg-[#c6c6c6]">
          <svg width="13" height="12" viewBox="0 0 13 12" fill="none" stroke="#666"><path d="M.5.5h12v12H.5zM4.5 0v12M8.5 0v12M0 4.5h13M0 8.5h13" /></svg>
        </button>
        <button aria-label="页面布局" className="flex w-[38px] justify-center">
          <svg width="13" height="12" viewBox="0 0 13 12" fill="none" stroke="#666"><path d="M.5.5h12v12H.5zM3.5 3v8h6V3zM5 5.5h3M5 7.5h3" /></svg>
        </button>
        <button aria-label="分页预览" className="flex w-[38px] justify-center">
          <svg width="13" height="12" viewBox="0 0 13 12" fill="none" stroke="#666"><path d="M.5.5h12v12H.5zM4.5 0v7.5M8.5 0v7.5H1" /></svg>
        </button>
      </div>
      <button aria-label="缩小" className="ml-1.5 h-0.5 w-1.5 bg-[#666]" />
      <input
        type="range"
        aria-label="显示比例"
        min={10}
        max={190}
        defaultValue={80}
        className="mx-1.5 h-px w-24 appearance-none bg-[#999] [&::-webkit-slider-thumb]:h-2.5 [&::-webkit-slider-thumb]:w-1 [&::-webkit-slider-thumb]:appearance-none [&::-webkit-slider-thumb]:bg-[#555]"
      />
      <button aria-label="放大">
        <svg width="8" height="8" viewBox="0 0 8 8" stroke="#555" strokeWidth="2"><path d="M4 0v8M0 4h8" /></svg>
      </button>
      <span className="mr-4 ml-[15px]">80%</span>
    </footer>
  );
}

/* ---------- things lying over the window ---------- */

function Arrow({ d, head }: { d: string; head: string }) {
  return (
    <g>
      <path d={d} stroke="#f00" strokeWidth="3.5" strokeLinecap="round" />
      <path d={head} fill="#f00" />
    </g>
  );
}

function Annotations() {
  return (
    <svg className="pointer-events-none absolute top-0 -left-px drop-shadow-[3px_2px_2px_rgba(0,0,0,0.5)]" width="460" height="230" viewBox="0 0 460 230">
      <path d="M336.5 95v16l4-4 3 6 3-1.5-3-5.500h5z" fill="#fff" stroke="#112" />
      <Arrow d="M98.5 207L93 86" head="M90 61l8 27-5-2-8 2z" />
      <Arrow d="M308.5 189L324 126" head="M329.5 102l1 28-6-3-8 0z" />
      <Arrow d="M435.5 215L423 156" head="M417.5 132l12 24-7 0-5 3z" />
    </svg>
  );
}

function Watermark() {
  return (
    <div className="pointer-events-none absolute right-0.5 bottom-0 flex h-[104px] w-[413px] bg-white/60">
      <div className="absolute top-[61px] left-[155px] flex h-[26px] w-[60px] items-center justify-center gap-1.5 rounded-md bg-white text-[#b0b0b0] shadow">
        <span>CH</span>
        <span>♪</span>
        <span>简</span>
      </div>
      <div className="relative flex w-[241px] flex-col items-center pr-1">
        <span className="text-[43px] leading-[50px] font-bold text-[#ff2d2d]">电脑技术网</span>
        <span className="pt-1 font-['Liberation_Serif',serif] text-[32px] leading-[44px] font-bold text-[#2f7af5]">www.tagxp.com</span>
      </div>
      <div className="relative h-[99px] w-[166px] overflow-hidden rounded-[22px] bg-[#2b7fff]/95 text-center text-[78px] leading-[94px] font-bold text-white">
        TAG
        <div className="absolute top-[52px] left-[13px] flex items-center gap-1 font-normal text-[#1a63d8]/25">
          <svg width="38" height="34" viewBox="0 0 38 34" fill="none" stroke="currentColor" strokeWidth="4">
            <path d="M36 5C20 2 4 10 3 20c0 8 10 12 20 6M30 12c-9 0-14 5-13 10" />
          </svg>
          <div className="flex flex-col text-left whitespace-nowrap">
            <span className="text-[21px] leading-[24px]">极光下载站</span>
            <span className="text-[15px] leading-5">www.xz7.com</span>
          </div>
        </div>
      </div>
    </div>
  );
}

export default function App() {
  return (
    <div className="relative h-screen overflow-hidden border-l border-[#b5b5b5] font-['Noto_Sans_CJK_SC',sans-serif] text-xs text-[#444]">
      <div className="flex h-full flex-col border-l border-[#217346] bg-[#e6e6e6]">
        <TitleBar />
        <Ribbon />
        <QuickAccess />
        <FormulaBar />
        <Sheet />
        <SheetTabs />
        <StatusBar />
      </div>
      <Annotations />
      <Watermark />
    </div>
  );
}
